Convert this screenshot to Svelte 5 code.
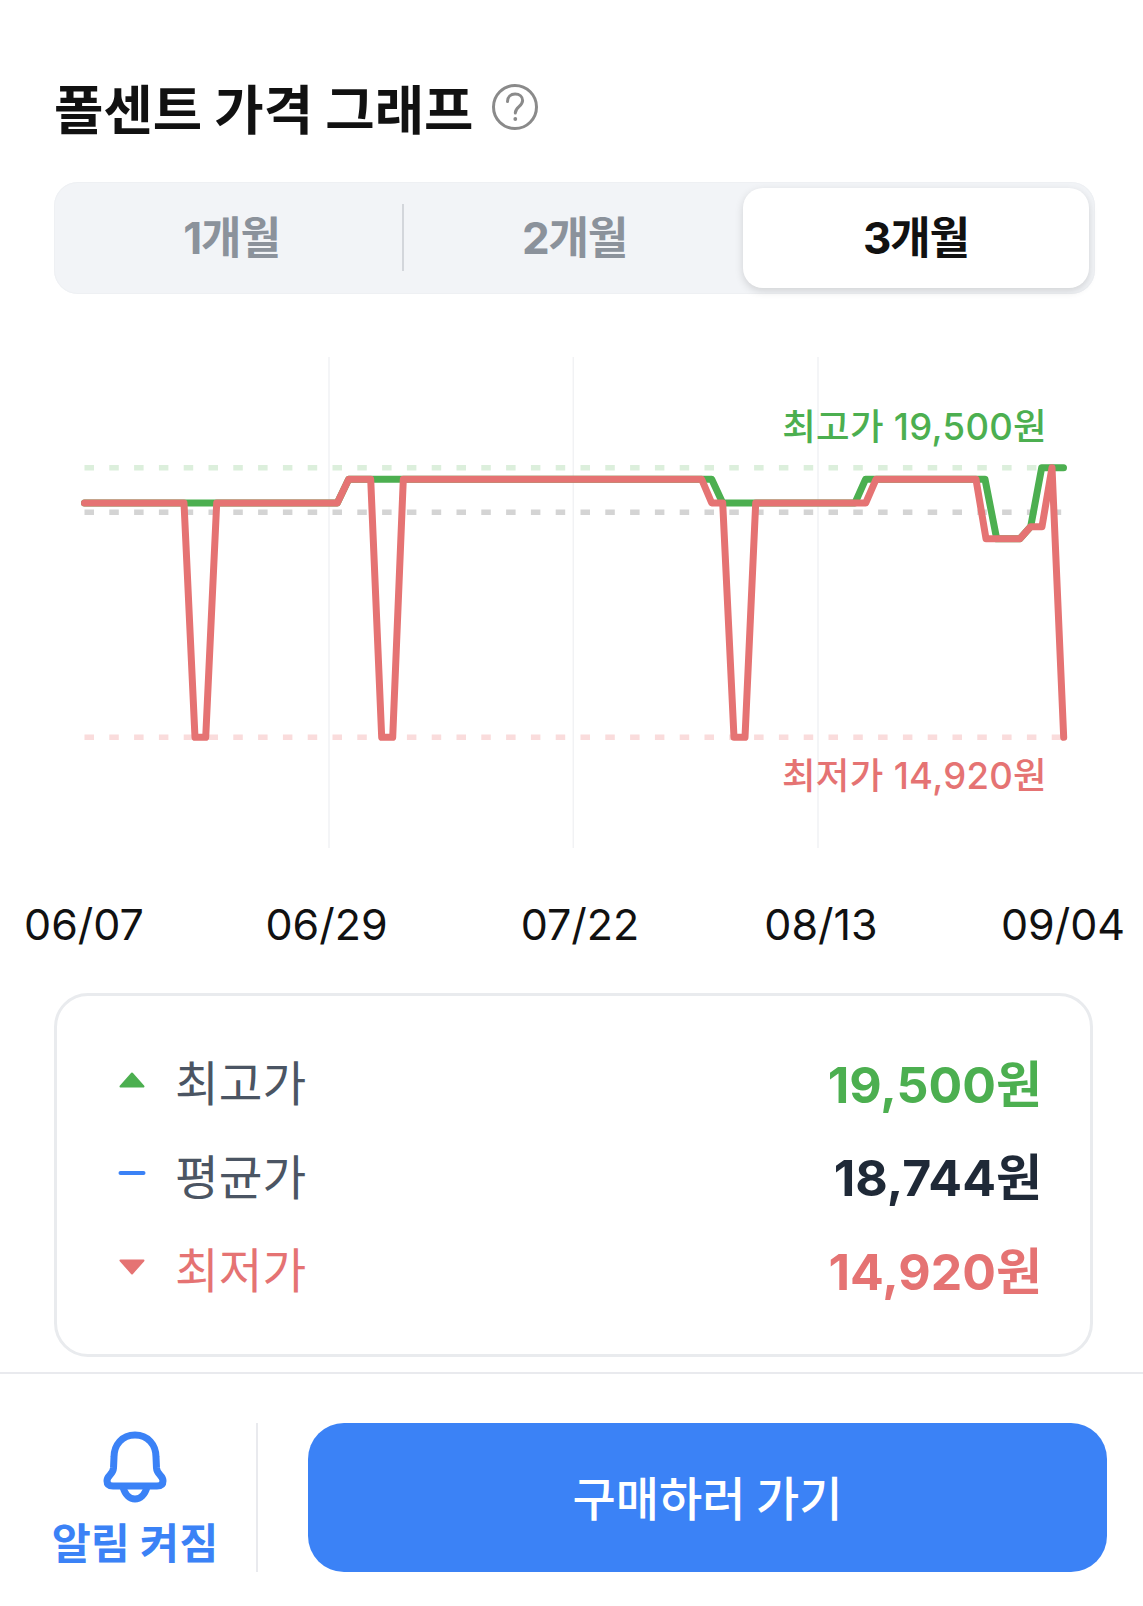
<script>
  const tabs = [
    { label: '1개월', active: false },
    { label: '2개월', active: false },
    { label: '3개월', active: true }
  ];
  const gridX = [329, 573.3, 818];
  const guides = [
    { y: 467.7, cls: 'g-high' },
    { y: 512.3, cls: 'g-avg' },
    { y: 737.3, cls: 'g-low' }
  ];
  const high = '84.5,503 337.3,503 348.7,479.3 711.7,479.3 722.7,503 855,503 865.5,479.3 985,479.3 996.7,538.7 1020,538.7 1030.7,526.7 1041.7,467.7 1063.5,467.7';
  const low = '84.5,503 184,503 195,737.3 205.7,737.3 216.7,503 337.3,503 348.7,479.3 370.7,479.3 381.7,737.3 392.7,737.3 403.3,479.3 701.7,479.3 711.7,503 722.7,503 734,737.3 745,737.3 755.7,503 865.7,503 876,479.3 976,479.3 986,538.7 1020,538.7 1030.7,526.7 1042,526.7 1052,467.7 1063.7,737.3';
  const dates = [
    { x: 84, t: '06/07' },
    { x: 326.5, t: '06/29' },
    { x: 580, t: '07/22' },
    { x: 821, t: '08/13' },
    { x: 1063, t: '09/04' }
  ];
  const rows = [
    { label: '최고가', value: '19,500원', tone: 'up', labelTone: '' },
    { label: '평균가', value: '18,744원', tone: 'avg', labelTone: '' },
    { label: '최저가', value: '14,920원', tone: 'down', labelTone: 'down' }
  ];
</script>

<div class="page">
  <header class="title-row">
    <h1>폴센트 가격 그래프</h1>
    <svg class="help" width="48" height="48" viewBox="0 0 48 48" aria-hidden="true">
      <circle cx="24" cy="24" r="21.5" />
      <path d="M16.5 18.5c0-4.6 3.3-7.5 7.6-7.5 4.4 0 7.5 2.8 7.5 6.6 0 5.9-7.3 6.3-7.3 12.4" />
      <circle class="dot" cx="24.3" cy="36" r="1.9" />
    </svg>
  </header>

  <div class="seg">
    {#each tabs as tab, i}
      <div class="tab" class:active={tab.active} class:sep={i === 0}><span>{tab.label}</span></div>
    {/each}
  </div>

  <svg class="chart" width="1143" height="630" viewBox="0 340 1143 630" role="img" aria-label="가격 그래프">
    {#each gridX as x}
      <line class="grid" x1={x} x2={x} y1="357" y2="848" />
    {/each}
    {#each guides as g}
      <line class="guide {g.cls}" x1="84.5" x2="1066" y1={g.y} y2={g.y} />
    {/each}
    <polyline class="line l-high" points={high} />
    <polyline class="line l-low" points={low} />
    <text class="note n-high" x="1047" y="440" text-anchor="end">최고가 19,500원</text>
    <text class="note n-low" x="1047" y="789" text-anchor="end">최저가 14,920원</text>
    {#each dates as d}
      <text class="date" x={d.x} y="940" text-anchor="middle">{d.t}</text>
    {/each}
  </svg>

  <section class="card">
    {#each rows as r}
      <div class="row">
        <span class="mark">
          {#if r.tone === 'up'}
            <svg width="28" height="16" viewBox="0 0 28 16"><path class="f-up" d="M14 1.5 25.5 14.5H2.5Z" /></svg>
          {:else if r.tone === 'avg'}
            <svg width="28" height="16" viewBox="0 0 28 16"><rect class="f-avg" x="0.5" y="6" width="27" height="4" rx="2" /></svg>
          {:else}
            <svg width="28" height="16" viewBox="0 0 28 16"><path class="f-down" d="M2.5 1.5H25.5L14 14.5Z" /></svg>
          {/if}
        </span>
        <span class="label {r.labelTone}">{r.label}</span>
        <span class="value {r.tone}">{r.value}</span>
      </div>
    {/each}
  </section>

  <footer class="bar">
    <div class="alert">
      <svg class="bell" width="66" height="72" viewBox="0 0 66 72" aria-hidden="true">
        <path d="M33 4C20 4 12 14 12 26L11.5 37C11 44 5 44 5 50C5 54 8 55 11 55H55C58 55 61 54 61 50C61 44 55 44 54.5 37L54 26C54 14 46 4 33 4Z" />
        <path d="M21 56C23 64 28 68 33 68C38 68 43 64 45 56" />
      </svg>
      <span>알림 켜짐</span>
    </div>
    <button class="buy" type="button"><span>구매하러 가기</span></button>
  </footer>
</div>

<style>
  :global(body) {
    margin: 0;
    background: #fff;
  }
  .page {
    width: 1143px;
    height: 1606px;
    overflow: hidden;
    background: #fff;
    font-family: Inter, "Noto Sans CJK KR", sans-serif;
  }
  .title-row {
    display: flex;
    align-items: center;
    gap: 17px;
    padding: 77px 54px 0;
    height: 60px;
  }
  h1 {
    margin: 0;
    font-size: 53.7px;
    line-height: 60px;
    font-weight: 700;
    color: #111;
    white-space: nowrap;
    font-family: "Noto Sans CJK KR", sans-serif;
  }
  .help circle,
  .help path {
    fill: none;
    stroke: #8a8a8a;
    stroke-width: 3;
    stroke-linecap: round;
  }
  .help .dot {
    fill: #8a8a8a;
    stroke: none;
  }
  .seg {
    display: grid;
    grid-template-columns: repeat(3, 1fr);
    box-sizing: border-box;
    width: 1041px;
    height: 112px;
    margin: 45px 0 0 54px;
    padding: 6px;
    border-radius: 24px;
    background: #f2f4f7;
    box-shadow: inset 0 0 0 1px #eef0f3;
  }
  .tab {
    display: flex;
    align-items: center;
    justify-content: center;
    padding-bottom: 6px;
    box-sizing: border-box;
    font-size: 44px;
    font-weight: 700;
    letter-spacing: -1.2px;
    color: #8b929b;
  }
  .sep {
    position: relative;
  }
  .sep::after {
    content: '';
    position: absolute;
    right: -1px;
    top: 16px;
    bottom: 17px;
    width: 2px;
    background: #d3d6db;
  }
  .active {
    margin-left: -3px;
    border-radius: 20px;
    background: #fff;
    color: #111;
    box-shadow: 0 3px 8px rgba(0, 0, 0, 0.14);
  }
  .chart {
    display: block;
    margin-top: 46px;
  }
  .grid {
    stroke: #f1f2f4;
    stroke-width: 1.5;
  }
  .guide {
    stroke-width: 5.5;
    stroke-dasharray: 9.5 15.3;
  }
  .g-high { stroke: #dcefdc; }
  .g-avg { stroke: #d4d4d4; }
  .g-low { stroke: #fadcdc; }
  .line {
    fill: none;
    stroke-width: 7;
    stroke-linejoin: round;
    stroke-linecap: round;
  }
  .l-high { stroke: #4caf50; }
  .l-low { stroke: #e57373; }
  .note {
    font-size: 36.5px;
    font-weight: 500;
    letter-spacing: 0.3px;
    font-family: Inter, "Noto Sans CJK KR", sans-serif;
  }
  .n-high { fill: #4caf50; }
  .n-low { fill: #e57373; }
  .date {
    font-size: 43px;
    fill: #111;
    font-family: Inter, sans-serif;
  }
  .card {
    box-sizing: border-box;
    width: 1039px;
    height: 364px;
    margin: 23px 0 0 54px;
    padding: 38px 0;
    border: 3px solid #e9ebee;
    border-radius: 34px;
  }
  .row {
    display: flex;
    align-items: center;
    height: 93.5px;
    padding: 0 48px 0 61px;
  }
  .mark {
    display: flex;
    width: 57px;
    flex: none;
    padding-bottom: 2px;
  }
  .label {
    font-size: 47.5px;
    color: #4b5563;
  }
  .label.down {
    color: #e57373;
  }
  .value {
    margin-left: auto;
    font-size: 50px;
    font-weight: 700;
  }
  .value.up { color: #4caf50; }
  .value.avg { color: #1f2937; }
  .value.down { color: #e57373; }
  .f-up { fill: #4caf50; stroke: #4caf50; stroke-width: 2; stroke-linejoin: round; }
  .f-avg { fill: #3b82f6; }
  .f-down { fill: #e57373; stroke: #e57373; stroke-width: 2; stroke-linejoin: round; }
  .bar {
    display: flex;
    box-sizing: border-box;
    height: 234px;
    margin-top: 15px;
    padding-top: 49px;
    border-top: 2px solid #e9eaee;
  }
  .alert {
    box-sizing: border-box;
    display: flex;
    flex-direction: column;
    align-items: center;
    flex: none;
    width: 258px;
    height: 149px;
    padding: 6px 0 0 14px;
    border-right: 2px solid #e9eaee;
    color: #3b82f6;
    font-size: 42.5px;
    font-weight: 700;
    line-height: 56px;
    white-space: nowrap;
  }
  .bell {
    margin: 2px 0 13px 0;
  }
  .bell path {
    fill: none;
    stroke: #3b82f6;
    stroke-width: 7;
    stroke-linecap: round;
    stroke-linejoin: round;
  }
  .buy {
    flex: none;
    width: 799px;
    height: 149px;
    margin-left: 50px;
    padding: 0 0 4px;
    border: 0;
    border-radius: 36px;
    background: #3b82f6;
    color: #fff;
    font: 500 47px "Noto Sans CJK KR", sans-serif;
  }
</style>
